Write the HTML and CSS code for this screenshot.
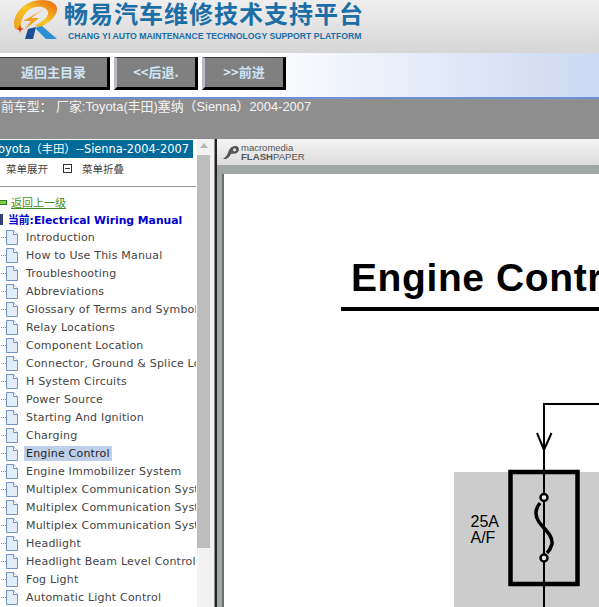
FILE: index.html
```html
<!DOCTYPE html>
<html lang="en">
<head>
    <meta charset="UTF-8">
    <title>Chang Yi Auto Maintenance</title>
    <link rel="stylesheet" href="styles.css">
</head>
<body>

    <div class="banner">
        <svg class="logo" width="46" height="42" viewBox="13 0 46 42">
            <defs>
                <linearGradient id="ring" x1="0" y1="1" x2="1" y2="0">
                    <stop offset="0" stop-color="#f0a020"/>
                    <stop offset="0.5" stop-color="#f7c628"/>
                    <stop offset="1" stop-color="#e8620e"/>
                </linearGradient>
            </defs>
            <path d="M15 29C10 15 25 0 42 0C52 0 58 5 57 10C56 18 46 25 38 28L35 25C43 22 49 16 48 12C47 8 42 6 36 7C27 8 20 18 21 28Z" fill="url(#ring)"/>
            <path d="M44 9L23 21L31 21L24 30L39 18L31 18Z" fill="#f2a01c"/>
            <path d="M28 29L36 27L33 39L25 39Z" fill="#1d4f96"/>
            <path d="M35 28L42 26L57 39L46 39Z" fill="#2b8fd6"/>
            <path d="M20 25L21 28L24 29L21 30L20 33L19 30L16 29L19 28Z" fill="#e23a12"/>
        </svg>
        <div class="banner-text">
            <div class="banner-title">畅易汽车维修技术支持平台</div>
            <div class="banner-sub">CHANG YI AUTO MAINTENANCE TECHNOLOGY SUPPORT PLATFORM</div>
        </div>
    </div>

    <div class="nav">
        <a class="nav-btn nav-home">返回主目录</a>
        <a class="nav-btn">&lt;&lt;后退.</a>
        <a class="nav-btn">&gt;&gt;前进</a>
    </div>

    <div class="car-bar">当前车型： 厂家:Toyota(丰田)塞纳（Sienna）2004-2007</div>

    <div class="main">
        <div class="side">
            <div class="tree">
                <div class="tree-title">Toyota（丰田）--Sienna-2004-2007</div>
                <div class="tree-tools">
                    <span class="tool-label">菜单展开</span>
                    <span class="tool-icon"></span>
                    <span class="tool-label">菜单折叠</span>
                </div>
                <div class="back-row">
                    <span class="back-icon"></span>
                    <a class="back-link">返回上一级</a>
                </div>
                <div class="current">
                    <span class="current-icon"></span>
                    <span>当前:Electrical Wiring Manual</span>
                </div>
                <ul class="items" id="items"></ul>
            </div>
            <div class="scrollbar">
                <div class="scroll-up"></div>
                <div class="scroll-thumb"></div>
            </div>
        </div>

        <div class="viewer">
            <div class="viewer-bar">
                <svg width="18" height="15" viewBox="0 0 20 17">
                    <path d="M1 16C3 14 6 12 7 8C8 4 11 1 15 1C18 1 19 3 19 5C19 8 16 10 12 10L10 10C9 13 7 15 4 16Z" fill="#555"/>
                    <circle cx="14" cy="5.5" r="1.8" fill="#e6e6e6"/>
                </svg>
                <div class="brand">
                    <div class="brand-top">macromedia</div>
                    <div class="brand-low"><b>FLASH</b>PAPER</div>
                </div>
            </div>
            <div class="paper-wrap">
                <div class="paper">
                    <h1 class="doc-title">Engine Control</h1>
                    <div class="doc-rule"></div>
                    <svg class="diagram" width="375" height="303" viewBox="224 304 375 303">
                        <rect x="454" y="472" width="145" height="135" fill="#cccccc"/>
                        <path d="M599 404H544V607" fill="none" stroke="#000" stroke-width="2"/>
                        <path d="M537 433L544 450L551.5 433" fill="none" stroke="#000" stroke-width="2"/>
                        <rect x="510.5" y="472" width="67" height="112" fill="none" stroke="#000" stroke-width="4.5"/>
                        <path d="M540 503C535 509 535 516 539 522C544 529 553 535 552 544C551 548 549 551 547 553" fill="none" stroke="#000" stroke-width="3.5"/>
                        <circle cx="544" cy="497.5" r="3.5" fill="#eee" stroke="#000" stroke-width="2.5"/>
                        <circle cx="544" cy="558" r="3.5" fill="#eee" stroke="#000" stroke-width="2.5"/>
                        <text class="fuse-label" x="470.5" y="527">25A</text>
                        <text class="fuse-label" x="470.5" y="543">A/F</text>
                    </svg>
                </div>
            </div>
        </div>
    </div>

    <script>
        var names = [
            'Introduction', 'How to Use This Manual', 'Troubleshooting', 'Abbreviations',
            'Glossary of Terms and Symbols', 'Relay Locations', 'Component Location',
            'Connector, Ground & Splice Locations', 'H System Circuits', 'Power Source',
            'Starting And Ignition', 'Charging', 'Engine Control', 'Engine Immobilizer System',
            'Multiplex Communication System', 'Multiplex Communication System',
            'Multiplex Communication System', 'Headlight', 'Headlight Beam Level Control',
            'Fog Light', 'Automatic Light Control'
        ];
        var pageIcon = '<svg class="page-icon" width="12" height="15" viewBox="0 0 12 15">' +
            '<path d="M.5 .5H7.5L11.5 4.5V14.5H.5Z" fill="#e3eefb" stroke="#6f93c4"/>' +
            '<path d="M7.5 .5V4.5H11.5" fill="#fff" stroke="#6f93c4"/></svg>';
        var list = document.getElementById('items');
        names.forEach(function(name) {
            var li = document.createElement('li');
            li.className = 'item';
            li.innerHTML = pageIcon;
            var label = document.createElement('span');
            label.className = name === 'Engine Control' ? 'item-label selected' : 'item-label';
            label.textContent = name;
            li.appendChild(label);
            list.appendChild(li);
        });
    </script>
</body>
</html>
```

FILE: styles.css
```css
html, body {
    margin: 0;
    padding: 0;
    height: 100%;
    overflow: hidden;
}
body {
    font-family: "Liberation Sans", "Noto Sans CJK SC", sans-serif;
    background-color: #8e8e8e;
}
.banner {
    display: flex;
    align-items: flex-start;
    height: 53px;
    padding-left: 13px;
    box-sizing: border-box;
    background: linear-gradient(to bottom, #efefef, #d6d6d6);
}
.logo {
    flex: none;
}
.banner-text {
    margin-left: 5px;
}
.banner-title {
    color: #1b6ea6;
    font-family: "Noto Sans CJK SC", sans-serif;
    font-size: 24px;
    font-weight: 700;
    line-height: 26px;
    letter-spacing: 1px;
    white-space: nowrap;
}
.banner-sub {
    margin: 5px 0 0 4px;
    color: #1b6ea6;
    font-size: 8.7px;
    font-weight: 700;
    line-height: 11px;
    white-space: nowrap;
}
.nav {
    display: flex;
    gap: 4px;
    height: 44px;
    padding-top: 4px;
    box-sizing: border-box;
    background: linear-gradient(to right, #ffffff 40%, #ccd9f2);
}
.nav-btn {
    box-sizing: border-box;
    width: 84px;
    height: 33px;
    border-style: solid;
    border-width: 1px 3px 3px 3px;
    border-color: #3a3a3a #000 #000 #b9bcc4;
    background-color: #808080;
    color: #cfe4f5;
    font-family: "Noto Sans CJK SC", sans-serif;
    font-size: 13px;
    font-weight: 700;
    line-height: 28px;
    text-align: center;
}
.nav-home {
    width: 110px;
    border-left: 0;
}
.car-bar {
    height: 40px;
    border-top: 2px solid #6f8fcf;
    margin-left: -12px;
    color: #f4f4f4;
    font-size: 12.9px;
    line-height: 16px;
    white-space: nowrap;
}
.main {
    display: flex;
    height: 469px;
}
.side {
    display: flex;
    flex: none;
    width: 213px;
    background-color: #fff;
}
.tree {
    flex: none;
    width: 196px;
    overflow: hidden;
    font-family: "DejaVu Sans", "Noto Sans CJK SC", sans-serif;
    font-size: 11px;
}
.tree-title {
    height: 18px;
    margin-top: 1px;
    margin-left: -7px;
    width: 200px;
    background-color: #046a99;
    color: #fff;
    font-size: 11.4px;
    line-height: 18px;
    white-space: nowrap;
}
.tree-tools {
    display: flex;
    align-items: center;
    height: 18px;
    padding: 1px 0 9px 6px;
    border-bottom: 1px solid #999;
    margin-bottom: 7px;
    color: #444;
    font-size: 10.5px;
}
.tool-icon {
    box-sizing: border-box;
    width: 9px;
    height: 9px;
    margin: 0 10px 0 15px;
    border: 1px solid #333;
    background: linear-gradient(#333, #333) center / 5px 1px no-repeat;
}
.back-row {
    display: flex;
    align-items: center;
    height: 16px;
    margin-left: -2px;
    font-size: 11px;
}
.back-icon {
    width: 9px;
    height: 5px;
    border: 1px solid #2f7d1e;
    background-color: #7fd04a;
    box-sizing: border-box;
    margin-right: 4px;
}
.back-link {
    color: #3f8f1f;
    text-decoration: underline;
}
.current {
    display: flex;
    align-items: center;
    gap: 5px;
    height: 18px;
    margin-left: -2px;
    color: #0000d0;
    font-size: 10.8px;
    font-weight: 700;
    white-space: nowrap;
}
.current-icon {
    flex: none;
    width: 5px;
    height: 11px;
    background-color: #33407a;
}
.items {
    list-style: none;
    margin: 0;
    padding: 0;
}
.item {
    display: flex;
    align-items: center;
    height: 18px;
    color: #444;
    letter-spacing: 0.2px;
    white-space: nowrap;
    background: repeating-linear-gradient(to right, #888 0 1px, transparent 1px 2px) 1px 9px / 5px 1px no-repeat;
}
.page-icon {
    flex: none;
    margin-left: 6px;
}
.item-label {
    margin-left: 6px;
    padding: 0 2px;
    line-height: 15px;
}
.selected {
    background-color: #c0cfe8;
    color: #222;
}
.scrollbar {
    flex: none;
    width: 17px;
    background-color: #f2f2f2;
    margin-left: 1px;
}
.scroll-up {
    position: relative;
    height: 16px;
}
.scroll-up::after {
    content: "";
    position: absolute;
    left: 3px;
    top: 4px;
    border-style: solid;
    border-width: 0 4px 5px 4px;
    border-color: transparent transparent #b4b4b4 transparent;
}
.scroll-thumb {
    width: 13px;
    height: 393px;
    background-color: #bdbdbd;
}
.viewer {
    flex: 1;
    min-width: 0;
    border-left: 2px solid #222;
    margin-left: 2px;
    background-color: #9fa8a6;
}
.viewer-bar {
    display: flex;
    align-items: center;
    gap: 1px;
    height: 26px;
    padding-left: 5px;
    background: linear-gradient(to bottom, #f4f4f4, #dcdcdc);
}
.brand {
    color: #555;
    font-size: 9.5px;
    line-height: 9.5px;
}
.brand-low {
    font-size: 9.6px;
}
.paper-wrap {
    height: 443px;
    padding: 9px 0 0 7px;
    box-sizing: border-box;
}
.paper {
    position: relative;
    height: 100%;
    background-color: #fff;
    box-shadow: -2px 0 0 #6a6f70;
    overflow: hidden;
}
.doc-title {
    margin: 0;
    padding: 82px 0 0 127px;
    font-size: 39px;
    font-weight: 700;
    letter-spacing: 0.6px;
    line-height: 44px;
    color: #000;
    white-space: nowrap;
}
.doc-rule {
    height: 4px;
    margin: 7px 0 0 117px;
    background-color: #000;
}
.diagram {
    position: absolute;
    left: 0;
    top: 130px;
}
.fuse-label {
    font-family: "Liberation Sans", sans-serif;
    font-size: 16px;
}
```
